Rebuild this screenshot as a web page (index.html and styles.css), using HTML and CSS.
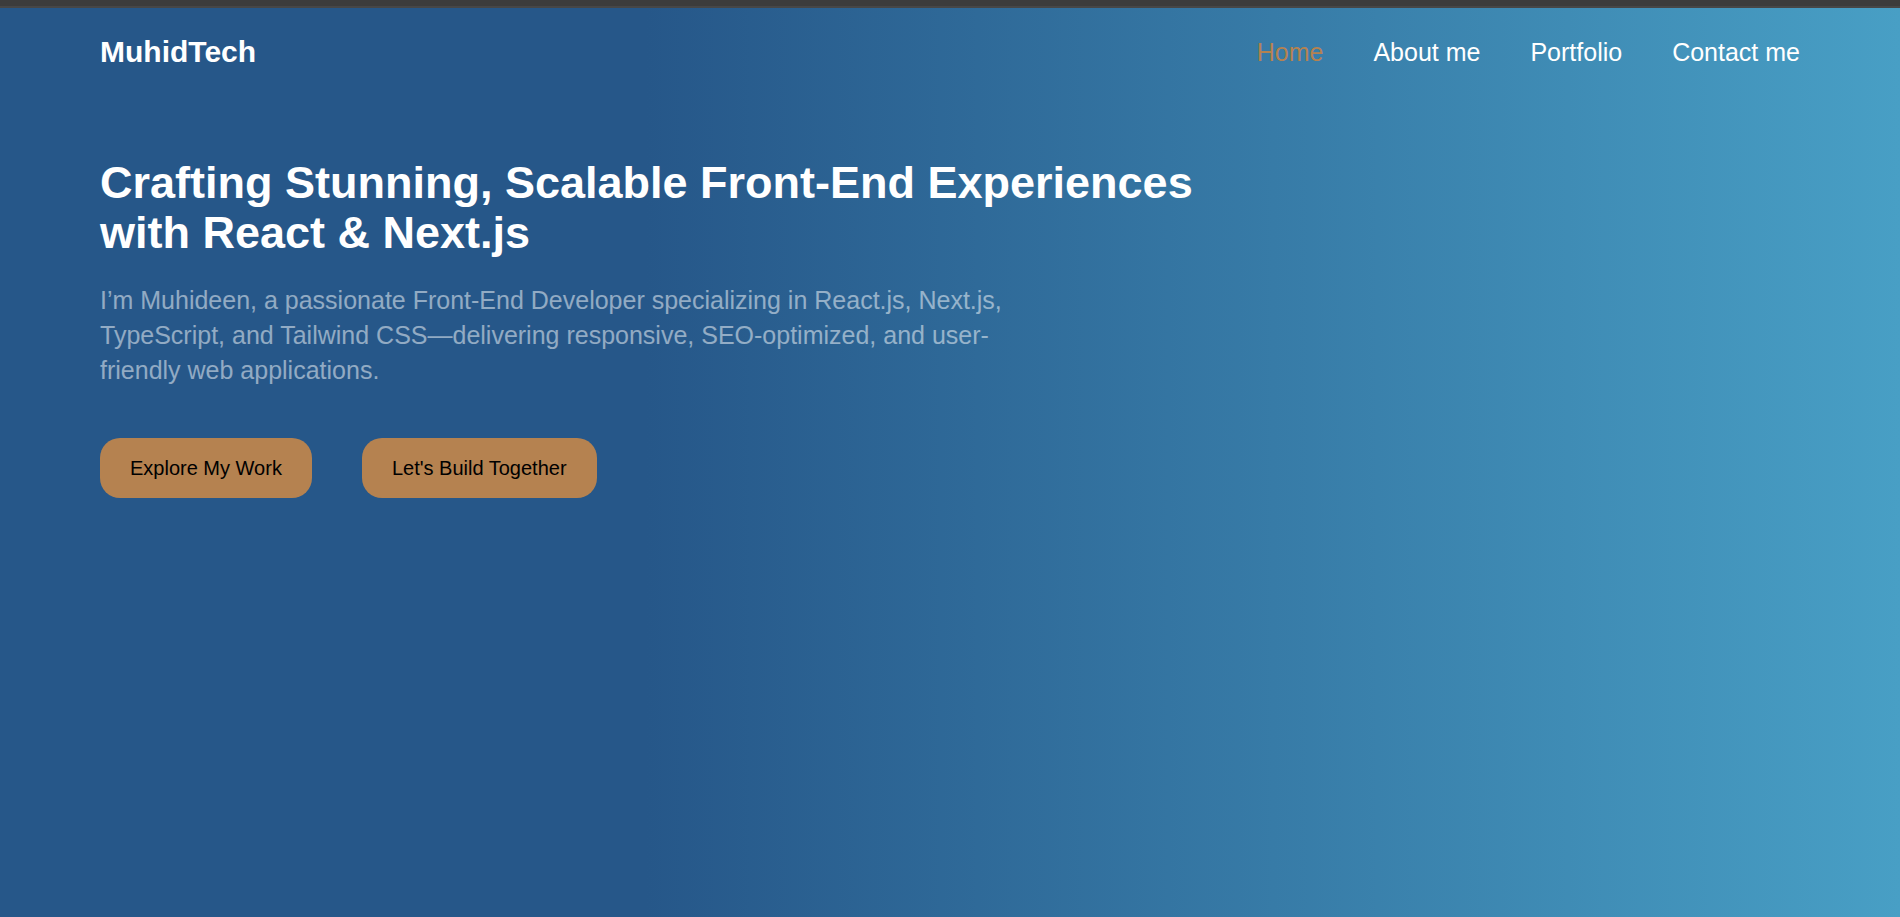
FILE: index.html
```html
<!DOCTYPE html>
<html lang="en">
<head>
<meta charset="utf-8">
<title>MuhidTech</title>
<link rel="stylesheet" href="styles.css">
</head>
<body>
<div class="top-strip"></div>
<div class="page">
  <header class="site-header">
    <a class="brand" href="#">MuhidTech</a>
    <nav class="nav" aria-label="Main">
      <a class="nav-link active" href="#home">Home</a>
      <a class="nav-link" href="#about">About me</a>
      <a class="nav-link" href="#portfolio">Portfolio</a>
      <a class="nav-link" href="#contact">Contact me</a>
    </nav>
  </header>
  <main class="hero">
    <h1 class="title">Crafting Stunning, Scalable Front-End Experiences with React &amp; Next.js</h1>
    <p class="lead">I’m Muhideen, a passionate Front-End Developer specializing in React.js, Next.js, TypeScript, and Tailwind CSS—delivering responsive, SEO-optimized, and user-friendly web applications.</p>
    <div class="actions">
      <button class="btn" type="button">Explore My Work</button>
      <button class="btn" type="button">Let's Build Together</button>
    </div>
  </main>
</div>
</body>
</html>
```
FILE: styles.css
```css
* {
  box-sizing: border-box;
  margin: 0;
}

body {
  display: flex;
  flex-direction: column;
  min-height: 100vh;
  color: #fff;
  font-family: "Liberation Sans", Arial, sans-serif;
}

.top-strip {
  height: 8px;
  border-bottom: 2px solid #474747;
  background: #3c3c3c;
}

.page {
  flex: 1;
  padding: 0 100px;
  background: linear-gradient(to right, #265789 34%, #489fc5 100%);
}

.site-header {
  display: flex;
  align-items: center;
  justify-content: space-between;
  padding: 24px 0;
}

.brand {
  color: #fff;
  font-size: 30px;
  font-weight: 700;
  line-height: 40px;
  text-decoration: none;
}

.nav {
  display: flex;
  gap: 50px;
}

.nav-link {
  color: #fff;
  font-size: 25px;
  line-height: 40px;
  text-decoration: none;
}

.nav-link.active {
  color: #b58250;
}

.hero {
  padding-top: 62px;
}

.title {
  max-width: 1100px;
  font-size: 45px;
  line-height: 50px;
}

.lead {
  max-width: 910px;
  margin-top: 25px;
  color: rgba(255, 255, 255, 0.5);
  font-size: 25px;
  line-height: 35px;
}

.actions {
  display: flex;
  gap: 50px;
  margin-top: 50px;
}

.btn {
  padding: 20px 30px;
  border: 0;
  border-radius: 20px;
  background: #b58250;
  color: #000;
  font-family: inherit;
  font-size: 20px;
  line-height: 20px;
}
```
